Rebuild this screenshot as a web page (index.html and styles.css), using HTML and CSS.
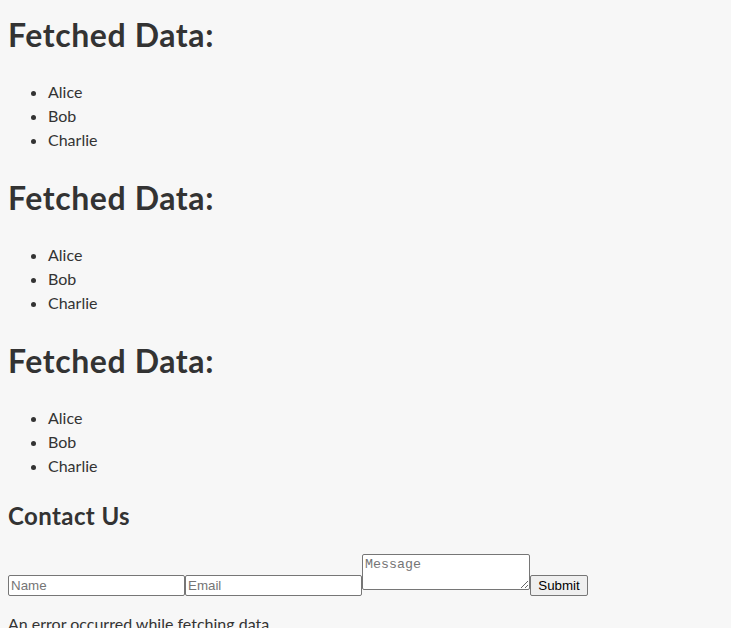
FILE: index.html
```html
<!DOCTYPE html>
<html lang="en">
<head>
<meta charset="utf-8">
<title>Fetched Data</title>
<link rel="stylesheet" href="styles.css">
</head>
<body class="page">
<h1 class="title title-first">Fetched Data:</h1>
<ul class="names">
<li>Alice</li>
<li>Bob</li>
<li>Charlie</li>
</ul>
<h1 class="title">Fetched Data:</h1>
<ul class="names">
<li>Alice</li>
<li>Bob</li>
<li>Charlie</li>
</ul>
<h1 class="title">Fetched Data:</h1>
<ul class="names">
<li>Alice</li>
<li>Bob</li>
<li>Charlie</li>
</ul>
<h2 class="subtitle">Contact Us</h2>
<form class="contact"><input class="field" type="text" placeholder="Name"><input class="field" type="email" placeholder="Email"><textarea class="message" placeholder="Message"></textarea><button class="submit" type="button">Submit</button></form>
<p class="error">An error occurred while fetching data</p>
</body>
</html>
```
FILE: styles.css
```css
html {
  background: #f7f7f7;
}
.page {
  margin: 0 8px 8px;
  background: #f7f7f7;
  color: #333333;
  font-family: "Segoe UI", Lato, "Open Sans", sans-serif;
  font-size: 16px;
  line-height: 1.5;
}
.title {
  font-size: 32px;
  font-weight: 700;
  line-height: 48px;
  letter-spacing: 0.6px;
  margin: 21.44px 0;
}
.title-first {
  margin-top: 11px;
}
.names {
  margin: 16px 0;
  padding-left: 40px;
  list-style: disc;
}
.subtitle {
  font-size: 24px;
  font-weight: 700;
  line-height: 36px;
  letter-spacing: 0.4px;
  margin: 19.92px 0;
}
.contact {
  margin: 0;
}
.field {
  box-sizing: border-box;
  width: 177px;
  height: 21px;
  margin: 0;
  padding: 1px 2px;
  border: 1px solid #767676;
  border-radius: 2px;
  background: #ffffff;
  font-family: "Liberation Sans", Arial, sans-serif;
  font-size: 13.333px;
  color: #000;
}
.field::placeholder {
  color: #757575;
}
.message {
  box-sizing: border-box;
  width: 168px;
  height: 36px;
  margin: 0;
  padding: 2px;
  border: 1px solid #767676;
  border-radius: 2px;
  background: #ffffff;
  font-family: "Liberation Mono", "DejaVu Sans Mono", monospace;
  font-size: 13.333px;
  vertical-align: baseline;
}
.message::placeholder {
  color: #757575;
}
.submit {
  box-sizing: border-box;
  width: 58px;
  height: 21px;
  margin: 0;
  padding: 1px 6px;
  border: 1px solid #767676;
  border-radius: 2px;
  background: #efefef;
  font-family: "Liberation Sans", Arial, sans-serif;
  font-size: 13.333px;
  color: #000;
}
.error {
  margin: 16px 0;
}
```
